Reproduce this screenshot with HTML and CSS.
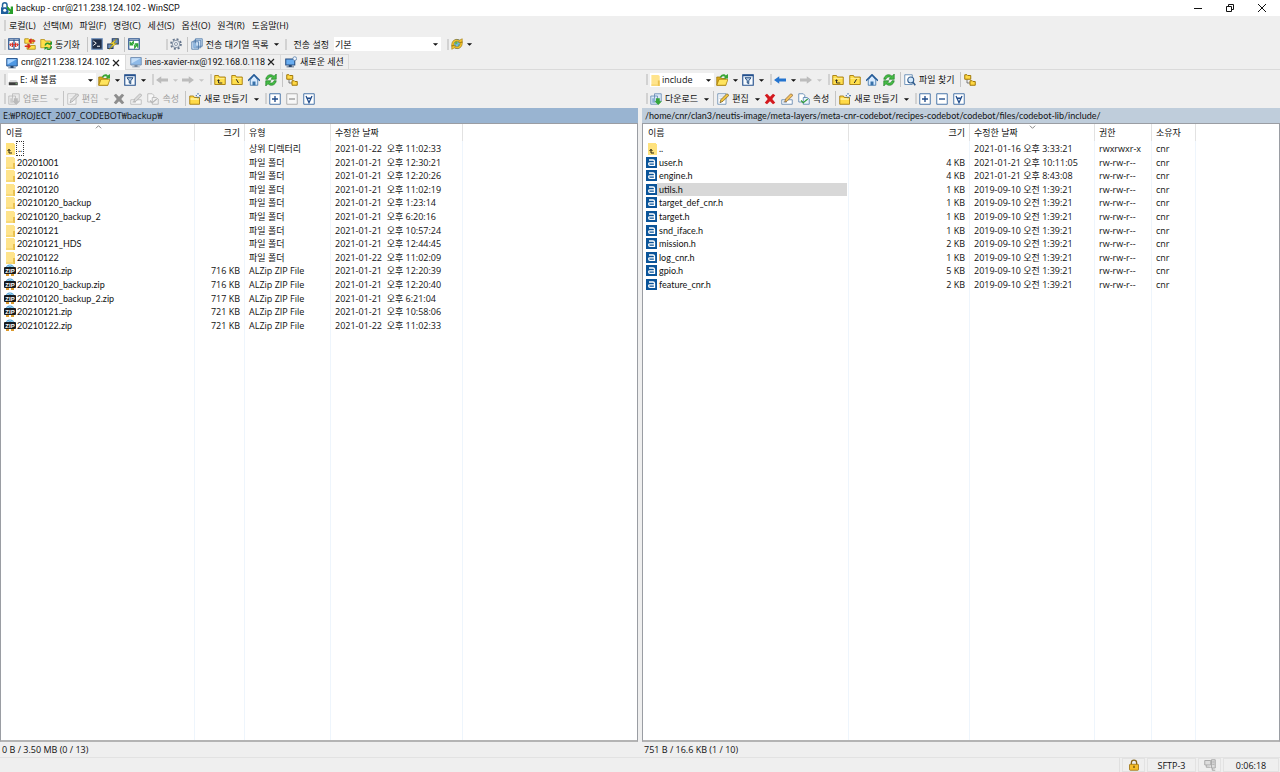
FILE: index.html
```html
<!DOCTYPE html>
<html lang="ko">
<head>
<meta charset="utf-8">
<title>backup - cnr@211.238.124.102 - WinSCP</title>
<link rel="stylesheet" href="styles.css">
</head>
<body>
<svg class="defs" aria-hidden="true">
  <symbol id="app" viewBox="0 0 16 16"><path d="M2 7V4a3 3 0 0 1 6 0v3" fill="none" stroke="#24659c" stroke-width="2"/><rect x="0" y="7" width="10" height="9" fill="#1f5f9c"/><circle cx="5" cy="11" r="2" fill="#fff"/><path d="M8 5l5 5V6h3v10H9l3-3-4-4z" fill="#29a02c"/></symbol>
  <symbol id="dn" viewBox="0 0 8 16"><path d="M1 7h6L4 10z" fill="currentColor"/></symbol>
  <symbol id="compare" viewBox="0 0 16 16"><path d="M1 1h14v14H1zM1 3h14M8 2v13" fill="#fff" stroke="#28528c" stroke-width="1.600"/><path d="M2 9h12M4.500 6.500L2.500 9l2 2.500M11.500 6.500l2 2.500-2 2.500M6 6v6M10 6v6" fill="none" stroke="#d92b22" stroke-width="1.300"/></symbol>
  <symbol id="fold2" viewBox="0 0 16 16"><path d="M1 1h5l1 1h6v5H1zM4 9h4l1 1h6v5H4z" fill="#ffe04a" stroke="#a8810a"/><path d="M15 4H8M10 1L7 4l3 3M1 11h6M5 8l3 3-3 3" fill="none" stroke="#dc2d20" stroke-width="1.800"/></symbol>
  <symbol id="foldsync" viewBox="0 0 16 16"><path d="M1 2h5l1 2h7v9H1z" fill="#ffdf4c" stroke="#b18a12"/><path d="M7 10a3.500 3.500 0 0 1 6-2M15 11a3.500 3.500 0 0 1-6 3" fill="none" stroke="#25962c" stroke-width="2"/><path d="M11 9h5V4zM11 12H6v4z" fill="#25962c"/></symbol>
  <symbol id="term" viewBox="0 0 16 16"><rect x="1" y="1" width="14" height="14" fill="#202d46" stroke="#6f92bf" stroke-width="1.500"/><path d="M3 4l4 3-4 3M8 11h4" fill="none" stroke="#fff" stroke-width="1.300"/></symbol>
  <symbol id="putty" viewBox="0 0 16 16"><path d="M7 1h8v7H7zM1 8h7v6H1z" fill="#6d90bc" stroke="#243c63" stroke-width="1.400"/><path d="M13 1L4 8h4l-5 7 10-8H9z" fill="#ffe43c" stroke="#8c7610" stroke-width=".7"/></symbol>
  <symbol id="syncbox" viewBox="0 0 16 16"><path d="M1 1h14v14H1zM1 3h14" fill="#fff" stroke="#28528c" stroke-width="1.500"/><path d="M3 9l4-4v3M3 5v4h4M13 8l-4 5v-4M13 13V8H9" fill="none" stroke="#2da335" stroke-width="1.700"/></symbol>
  <symbol id="gear" viewBox="0 0 16 16"><circle cx="8" cy="8" r="6.500" fill="none" stroke="#65758c" stroke-width="2.500" stroke-dasharray="2.600 2.500"/><circle cx="8" cy="8" r="5" fill="#e7ebf0" stroke="#6e7d92"/><circle cx="8" cy="8" r="2" fill="#fff" stroke="#6e7d92"/></symbol>
  <symbol id="queue" viewBox="0 0 16 16"><path d="M6 1h9v10H6zM4 3h9v10H4zM1 5h9v10H1z" fill="#cfe2f5" stroke="#4672a3"/><path d="M3 7h4v6H3z" fill="#8fb7df"/></symbol>
  <symbol id="globe" viewBox="0 0 16 16"><circle cx="8" cy="8" r="6" fill="#73b5e9" stroke="#2a69a5"/><path d="M5 5l3-1 1 3-3 2zM9 9l3-1-2 3z" fill="#65b64a"/><path d="M1 11C0 3 7 0 11 3l4-2v5h-5l1-1C7 3 3 5 4 10zM15 5c1 8-6 11-10 8l-4 2v-5h5l-1 1c4 2 8 0 7-5z" fill="#f7c62d" stroke="#946f08" stroke-width=".7"/></symbol>
  <symbol id="mon" viewBox="0 0 16 16"><path d="M1 2h14v10H1z" fill="#4f98e4" stroke="#29568f" stroke-width="1.300"/><path d="M2 3h12L2 10z" fill="#a9d4ff"/><path d="M6 12h4v2h3v1H3v-1h3z" fill="#29466b"/></symbol>
  <symbol id="monnew" viewBox="0 0 16 16"><path d="M1 4h12v8H1z" fill="#69adf0" stroke="#244c80" stroke-width="1.400"/><path d="M5 12h4v2h3v1H2v-1h3z" fill="#29466b"/><circle cx="13" cy="3.500" r="2.500" fill="#f1f7ff" stroke="#5178a4"/></symbol>
  <symbol id="drive" viewBox="0 0 16 16"><path d="M3 8h8l2 3H1z" fill="#ddd"/><path d="M1 11h12v4H1z" fill="#3c3c3c"/><path d="M10 13h2" stroke="#8ee58e"/></symbol>
  <symbol id="open" viewBox="0 0 16 16"><path d="M1 15V4h5l1 2h6v9z" fill="#d9a919" stroke="#9b7607"/><path d="M1 15l3-8h12l-3 8z" fill="#ffe45d" stroke="#a67d0c"/><path d="M5 4c3-5 7-4 8-2l3-2v6h-6l2-2c-2-2-4-1-5 1z" fill="#37a535"/></symbol>
  <symbol id="filter" viewBox="0 0 16 16"><path d="M1 1h14v14H1z" fill="#f7fbff" stroke="#24508d" stroke-width="1.500"/><path d="M1 2h14" stroke="#24508d" stroke-width="2"/><path d="M4 5h8L9 9v4l-2-1V9z" fill="#b5cce6" stroke="#244d7e" stroke-width="1.300"/></symbol>
  <symbol id="back" viewBox="0 0 16 16"><path d="M0 8l7-5v3h9v4H7v3z" fill="currentColor"/></symbol>
  <symbol id="fwd" viewBox="0 0 16 16"><path d="M16 8L9 3v3H0v4h9v3z" fill="currentColor"/></symbol>
  <symbol id="folder" viewBox="0 0 16 16"><path d="M1 14V2h5l1 2h8v10z" fill="#ffdf4d" stroke="#a57b0b" stroke-width="1.200"/><path d="M2 6h12" stroke="#fff29d"/></symbol>
  <symbol id="up" viewBox="0 0 16 16"><use href="#folder"/><path d="M6 12h5M6 12V8M4.500 9.500L6 7.500l1.500 2" fill="none" stroke="#222" stroke-width="1.200"/></symbol>
  <symbol id="root" viewBox="0 0 16 16"><use href="#folder"/><path d="M7 7l3 5" stroke="#222" stroke-width="1.300"/></symbol>
  <symbol id="rootfw" viewBox="0 0 16 16"><use href="#folder"/><path d="M10 7l-3 5" stroke="#222" stroke-width="1.300"/></symbol>
  <symbol id="home" viewBox="0 0 16 16"><path d="M3 8v7h10V8L8 2z" fill="#d8ebff" stroke="#2d659f"/><path d="M0 9l8-8 8 8" fill="none" stroke="#245b98" stroke-width="2"/><path d="M6 10h4v5H6z" fill="#3972aa"/></symbol>
  <symbol id="refresh" viewBox="0 0 16 16"><path d="M1 7c1-6 7-8 11-4l3-3v7H8l2-2C8 3 5 4 4 7zM15 9c-1 6-7 8-11 4l-3 3V9h7l-2 2c2 2 5 1 6-2z" fill="#45bd45" stroke="#16761c" stroke-width=".8"/></symbol>
  <symbol id="tree" viewBox="0 0 16 16"><path d="M4 7v5h6" fill="none" stroke="#555"/><path d="M1 1h3l1 1h4v5H1zM8 9h3l1 1h3v5H8z" fill="#ffd844" stroke="#9f7605" stroke-width="1.300"/></symbol>
  <symbol id="load" viewBox="0 0 16 16"><path d="M6 1h9v10H6zM1 4h9v11H1z" fill="#d9e8f7" stroke="#5c83ae"/><path d="M3 7h4v6H3z" fill="#8aafd3"/><path d="M8 7h5v4h3l-5 5-5-5h2z" fill="#36a53b"/></symbol>
  <symbol id="edit" viewBox="0 0 16 16"><path d="M1 1h11v14H1z" fill="#fff" stroke="#5981aa"/><path d="M3 4h7M3 7h4" stroke="#a9bed3"/><path d="M4 13l1-4 8-8 3 2-8 8z" fill="#f1c33d" stroke="#77612c"/></symbol>
  <symbol id="del" viewBox="0 0 16 16"><path d="M1 3l3-2 4 4 4-4 3 2-4 5 4 5-3 2-4-4-4 4-3-2 4-5z" fill="currentColor"/></symbol>
  <symbol id="ren" viewBox="0 0 16 16"><path d="M1 9h14v6H1z" fill="#fff" stroke="#5079a6"/><path d="M3 12h5" stroke="#5079a6"/><path d="M5 12l1-4 7-7 3 2-8 8z" fill="#f4c25c" stroke="#896435"/></symbol>
  <symbol id="prop" viewBox="0 0 16 16"><path d="M1 1h6l2 2v9H1z" fill="#fff" stroke="#4777a8"/><path d="M7 6h5l3 2v7H7z" fill="#e8f2fc" stroke="#4777a8"/><path d="M4 10l3 3 6-5" fill="none" stroke="#319d38" stroke-width="1.500"/></symbol>
  <symbol id="newf" viewBox="0 0 16 16"><path d="M1 15V4h5l1 2h7v9z" fill="#ffda47" stroke="#a57b0b" stroke-width="1.200"/><path d="M2 8h11" stroke="#fff3a7" stroke-width="2"/><path d="M12 0v7M9 3.500h7" stroke="#4877ac" stroke-width="1.400"/><circle cx="12" cy="3.500" r="1.500" fill="#fff"/></symbol>
  <symbol id="plus" viewBox="0 0 16 16"><path d="M1 1h14v14H1z" fill="#fff" stroke="#4773a8" stroke-width="1.300"/><path d="M8 4v8M4 8h8" stroke="#204c8b" stroke-width="1.800"/></symbol>
  <symbol id="minus" viewBox="0 0 16 16"><path d="M1 1h14v14H1z" fill="#fff" stroke="#4773a8" stroke-width="1.300"/><path d="M4 8h8" stroke="#204c8b" stroke-width="1.800"/></symbol>
  <symbol id="selfilt" viewBox="0 0 16 16"><path d="M1 1h14v14H1z" fill="#fff" stroke="#4773a8" stroke-width="1.300"/><path d="M4 4l4 9 4-9M5 7h6" fill="none" stroke="#204c8b" stroke-width="1.700"/></symbol>
  <symbol id="find" viewBox="0 0 16 16"><path d="M1 1h10v13H1z" fill="#fff" stroke="#4777a8"/><circle cx="9" cy="8" r="4" fill="#d5eafc" stroke="#325d8d" stroke-width="1.400"/><path d="M12 11l3 4" stroke="#325d8d" stroke-width="2"/></symbol>
  <symbol id="rowfolder" viewBox="0 0 10 13"><path d="M0 1h8v1h1v11H0z" fill="#ffe48c"/><path d="M7 7h2v6H7z" fill="#e9c04f"/><path d="M0 12h8" stroke="#f2cf65"/></symbol>
  <symbol id="rowup" viewBox="0 0 10 13"><path d="M0 1h8v1h1v11H0z" fill="#ffe27d"/><path d="M3 7v4h3M1.500 9L3 7.500 4.500 9" fill="none" stroke="#28240f"/></symbol>
  <symbol id="rowzip" viewBox="0 0 12 13"><circle cx="6" cy="5" r="4.500" fill="#489ad2"/><path d="M3 3q3-3 6 0" fill="none" stroke="#a9dcf8"/><path d="M2 10h3v2H2zM7 10h3v2H7z" fill="#dc9a2d"/><rect y="3" width="12" height="7" rx="1" fill="#171b20"/><text x="6" y="9" class="ziptext">ZIP</text></symbol>
  <symbol id="rowh" viewBox="0 0 11 13"><path d="M0 1h11v11H0z" fill="#0a5499"/><path d="M3 4h4q1.500 0 1.500 1.500V9.300H4Q2.700 9.300 2.700 8T4 6.800h4" fill="none" stroke="#fff" stroke-width="1.300"/></symbol>
  <symbol id="lock" viewBox="0 0 16 16"><path d="M4.500 8V5a3.500 3.500 0 0 1 7 0v3" fill="none" stroke="#856319" stroke-width="1.700"/><rect x="2" y="7" width="12" height="8" rx="1" fill="#f6bd27" stroke="#94690a"/><path d="M8 9v3" stroke="#5e430b" stroke-width="1.600"/></symbol>
  <symbol id="comp" viewBox="0 0 16 16"><path d="M1 2h8v6H1zM3 8v3h6M10 1h5v11h-5zM11 4h3M11 7h3M11 12v3h4" fill="#ddd" stroke="#aaa" stroke-width="1.300"/></symbol>
</svg>
<div class="window">
  <header class="title">
    <svg class="i"><use href="#app"/></svg><h1>backup - cnr@211.238.124.102 - WinSCP</h1>
    <button aria-label="최소화"><svg viewBox="0 0 10 10"><path d="M1 5.500h8"/></svg></button>
    <button aria-label="이전 크기로"><svg viewBox="0 0 10 10"><path d="M1.500 3.500h5v5h-5zM3.500 3V1.500h5v5H7"/></svg></button>
    <button aria-label="닫기"><svg viewBox="0 0 10 10"><path d="M1 1l8 8M9 1L1 9"/></svg></button>
  </header>
  <nav class="menu"><i class="grip"></i><button>로컬(L)</button><button>선택(M)</button><button>파일(F)</button><button>명령(C)</button><button>세션(S)</button><button>옵션(O)</button><button>원격(R)</button><button>도움말(H)</button></nav>
  <div class="bar main">
    <i class="grip"></i><button aria-label="비교"><svg class="i"><use href="#compare"/></svg></button><button aria-label="동기화 탐색"><svg class="i"><use href="#fold2"/></svg></button><button><svg class="i"><use href="#foldsync"/></svg><span>동기화</span></button><i class="sep"></i><button aria-label="터미널"><svg class="i"><use href="#term"/></svg></button><button aria-label="PuTTY"><svg class="i"><use href="#putty"/></svg></button><i class="sep"></i><button aria-label="최신 상태 유지"><svg class="i"><use href="#syncbox"/></svg></button>
    <i class="grip far"></i><button aria-label="환경 설정"><svg class="i"><use href="#gear"/></svg></button><i class="sep"></i><button><svg class="i"><use href="#queue"/></svg><span>전송 대기열 목록</span></button><button class="ar" aria-label="목록 메뉴"><svg><use href="#dn"/></svg></button>
    <i class="grip"></i><label for="preset">전송 설정</label><span class="combo preset"><select id="preset"><option>기본</option></select><svg><use href="#dn"/></svg></span>
    <i class="grip"></i><button aria-label="세션 색"><svg class="i"><use href="#globe"/></svg></button><button class="ar" aria-label="세션 메뉴"><svg><use href="#dn"/></svg></button>
  </div>
  <div class="tabs">
    <div class="tab on"><svg class="i"><use href="#mon"/></svg><button>cnr@211.238.124.102</button><button class="x" aria-label="탭 닫기"><svg viewBox="0 0 10 10"><path d="M2 2l6 6M8 2L2 8"/></svg></button></div>
    <div class="tab"><svg class="i pale"><use href="#mon"/></svg><button>ines-xavier-nx@192.168.0.118</button><button class="x" aria-label="탭 닫기"><svg viewBox="0 0 10 10"><path d="M2 2l6 6M8 2L2 8"/></svg></button></div>
    <div class="tab"><svg class="i"><use href="#monnew"/></svg><button>새로운 세션</button></div>
  </div>
  <main class="panes">
    <section class="pane">
      <div class="bar">
        <i class="grip"></i><span class="combo drive"><svg class="i"><use href="#drive"/></svg><select aria-label="드라이브"><option>E: 새 볼륨</option></select><svg><use href="#dn"/></svg></span><button aria-label="열기"><svg class="i"><use href="#open"/></svg></button><button class="ar" aria-label="열기 메뉴"><svg><use href="#dn"/></svg></button><button aria-label="필터"><svg class="i"><use href="#filter"/></svg></button><button class="ar" aria-label="필터 메뉴"><svg><use href="#dn"/></svg></button>
        <i class="grip"></i><button disabled aria-label="뒤로"><svg class="i nav"><use href="#back"/></svg></button><button disabled class="ar" aria-label="뒤로 메뉴"><svg><use href="#dn"/></svg></button><button disabled aria-label="앞으로"><svg class="i nav"><use href="#fwd"/></svg></button><button disabled class="ar" aria-label="앞으로 메뉴"><svg><use href="#dn"/></svg></button>
        <i class="grip"></i><button aria-label="상위"><svg class="i"><use href="#up"/></svg></button><button aria-label="루트"><svg class="i"><use href="#root"/></svg></button><button aria-label="홈"><svg class="i"><use href="#home"/></svg></button><button aria-label="새로 고침"><svg class="i"><use href="#refresh"/></svg></button><i class="sep"></i><button aria-label="트리"><svg class="i"><use href="#tree"/></svg></button>
      </div>
      <div class="bar">
        <i class="grip"></i><button disabled><svg class="i"><use href="#load"/></svg><span>업로드</span></button><button disabled class="ar" aria-label="업로드 메뉴"><svg><use href="#dn"/></svg></button><i class="sep"></i><button disabled><svg class="i"><use href="#edit"/></svg><span>편집</span></button><button disabled class="ar" aria-label="편집 메뉴"><svg><use href="#dn"/></svg></button><button disabled aria-label="삭제"><svg class="i dark"><use href="#del"/></svg></button><button disabled aria-label="이름 바꾸기"><svg class="i"><use href="#ren"/></svg></button><button disabled><svg class="i"><use href="#prop"/></svg><span>속성</span></button><i class="sep"></i><button><svg class="i"><use href="#newf"/></svg><span>새로 만들기</span></button><button class="ar" aria-label="새로 만들기 메뉴"><svg><use href="#dn"/></svg></button>
        <i class="grip"></i><button aria-label="선택"><svg class="i"><use href="#plus"/></svg></button><button disabled aria-label="선택 해제"><svg class="i"><use href="#minus"/></svg></button><button aria-label="선택 필터"><svg class="i"><use href="#selfilt"/></svg></button>
      </div>
      <div class="path active">E:₩PROJECT_2007_CODEBOT₩backup₩</div>
      <div class="list">
        <table>
          <colgroup><col class="l1"><col class="l2"><col class="l3"><col class="l4"><col></colgroup>
          <thead><tr><th>이름<svg class="sort" viewBox="0 0 8 4"><path d="M1 3.500L4 .5l3 3"/></svg></th><th class="n">크기</th><th>유형</th><th>수정한 날짜</th><th></th></tr></thead>
          <tbody>
            <tr><td><div class="f"><svg><use href="#rowup"/></svg><span class="focus">..</span></div></td><td></td><td>상위 디렉터리</td><td>2021-01-22&nbsp; 오후 11:02:33</td><td></td></tr>
            <tr><td><div class="f"><svg><use href="#rowfolder"/></svg><span>20201001</span></div></td><td></td><td>파일 폴더</td><td>2021-01-21&nbsp; 오후 12:30:21</td><td></td></tr>
            <tr><td><div class="f"><svg><use href="#rowfolder"/></svg><span>20210116</span></div></td><td></td><td>파일 폴더</td><td>2021-01-21&nbsp; 오후 12:20:26</td><td></td></tr>
            <tr><td><div class="f"><svg><use href="#rowfolder"/></svg><span>20210120</span></div></td><td></td><td>파일 폴더</td><td>2021-01-21&nbsp; 오후 11:02:19</td><td></td></tr>
            <tr><td><div class="f"><svg><use href="#rowfolder"/></svg><span>20210120_backup</span></div></td><td></td><td>파일 폴더</td><td>2021-01-21&nbsp; 오후 1:23:14</td><td></td></tr>
            <tr><td><div class="f"><svg><use href="#rowfolder"/></svg><span>20210120_backup_2</span></div></td><td></td><td>파일 폴더</td><td>2021-01-21&nbsp; 오후 6:20:16</td><td></td></tr>
            <tr><td><div class="f"><svg><use href="#rowfolder"/></svg><span>20210121</span></div></td><td></td><td>파일 폴더</td><td>2021-01-21&nbsp; 오후 10:57:24</td><td></td></tr>
            <tr><td><div class="f"><svg><use href="#rowfolder"/></svg><span>20210121_HDS</span></div></td><td></td><td>파일 폴더</td><td>2021-01-21&nbsp; 오후 12:44:45</td><td></td></tr>
            <tr><td><div class="f"><svg><use href="#rowfolder"/></svg><span>20210122</span></div></td><td></td><td>파일 폴더</td><td>2021-01-22&nbsp; 오후 11:02:09</td><td></td></tr>
            <tr><td><div class="f z"><svg><use href="#rowzip"/></svg><span>20210116.zip</span></div></td><td class="n">716 KB</td><td>ALZip ZIP File</td><td>2021-01-21&nbsp; 오후 12:20:39</td><td></td></tr>
            <tr><td><div class="f z"><svg><use href="#rowzip"/></svg><span>20210120_backup.zip</span></div></td><td class="n">716 KB</td><td>ALZip ZIP File</td><td>2021-01-21&nbsp; 오후 12:20:40</td><td></td></tr>
            <tr><td><div class="f z"><svg><use href="#rowzip"/></svg><span>20210120_backup_2.zip</span></div></td><td class="n">717 KB</td><td>ALZip ZIP File</td><td>2021-01-21&nbsp; 오후 6:21:04</td><td></td></tr>
            <tr><td><div class="f z"><svg><use href="#rowzip"/></svg><span>20210121.zip</span></div></td><td class="n">721 KB</td><td>ALZip ZIP File</td><td>2021-01-21&nbsp; 오후 10:58:06</td><td></td></tr>
            <tr><td><div class="f z"><svg><use href="#rowzip"/></svg><span>20210122.zip</span></div></td><td class="n">721 KB</td><td>ALZip ZIP File</td><td>2021-01-22&nbsp; 오후 11:02:33</td><td></td></tr>
            <tr class="fill"><td></td><td></td><td></td><td></td><td></td></tr>
          </tbody>
        </table>
      </div>
      <div class="sum">0 B / 3.50 MB (0 / 13)</div>
    </section>
    <section class="pane">
      <div class="bar">
        <i class="grip"></i><span class="combo dir"><svg class="i"><use href="#rowfolder"/></svg><select aria-label="디렉터리"><option>include</option></select><svg><use href="#dn"/></svg></span><button aria-label="열기"><svg class="i"><use href="#open"/></svg></button><button class="ar" aria-label="열기 메뉴"><svg><use href="#dn"/></svg></button><button aria-label="필터"><svg class="i"><use href="#filter"/></svg></button><button class="ar" aria-label="필터 메뉴"><svg><use href="#dn"/></svg></button>
        <i class="grip"></i><button aria-label="뒤로"><svg class="i blue"><use href="#back"/></svg></button><button class="ar" aria-label="뒤로 메뉴"><svg><use href="#dn"/></svg></button><button disabled aria-label="앞으로"><svg class="i nav"><use href="#fwd"/></svg></button><button disabled class="ar" aria-label="앞으로 메뉴"><svg><use href="#dn"/></svg></button>
        <i class="grip"></i><button aria-label="상위"><svg class="i"><use href="#up"/></svg></button><button aria-label="루트"><svg class="i"><use href="#rootfw"/></svg></button><button aria-label="홈"><svg class="i"><use href="#home"/></svg></button><button aria-label="새로 고침"><svg class="i"><use href="#refresh"/></svg></button><i class="sep"></i><button><svg class="i"><use href="#find"/></svg><span>파일 찾기</span></button><i class="sep"></i><button aria-label="트리"><svg class="i"><use href="#tree"/></svg></button>
      </div>
      <div class="bar">
        <i class="grip"></i><button><svg class="i"><use href="#load"/></svg><span>다운로드</span></button><button class="ar" aria-label="다운로드 메뉴"><svg><use href="#dn"/></svg></button><i class="sep"></i><button><svg class="i"><use href="#edit"/></svg><span>편집</span></button><button class="ar" aria-label="편집 메뉴"><svg><use href="#dn"/></svg></button><button aria-label="삭제"><svg class="i red"><use href="#del"/></svg></button><button aria-label="이름 바꾸기"><svg class="i"><use href="#ren"/></svg></button><button><svg class="i"><use href="#prop"/></svg><span>속성</span></button><i class="sep"></i><button><svg class="i"><use href="#newf"/></svg><span>새로 만들기</span></button><button class="ar" aria-label="새로 만들기 메뉴"><svg><use href="#dn"/></svg></button>
        <i class="grip"></i><button aria-label="선택"><svg class="i"><use href="#plus"/></svg></button><button aria-label="선택 해제"><svg class="i"><use href="#minus"/></svg></button><button aria-label="선택 필터"><svg class="i"><use href="#selfilt"/></svg></button>
      </div>
      <div class="path">/home/cnr/clan3/neutis-image/meta-layers/meta-cnr-codebot/recipes-codebot/codebot/files/codebot-lib/include/</div>
      <div class="list">
        <table>
          <colgroup><col class="r1"><col class="r2"><col class="r3"><col class="r4"><col class="r5"><col></colgroup>
          <thead><tr><th>이름</th><th class="n">크기</th><th>수정한 날짜<svg class="sort" viewBox="0 0 8 4"><path d="M1 .5l3 3 3-3"/></svg></th><th>권한</th><th>소유자</th><th></th></tr></thead>
          <tbody>
            <tr><td><div class="f"><svg><use href="#rowup"/></svg><span>..</span></div></td><td></td><td>2021-01-16 오후 3:33:21</td><td>rwxrwxr-x</td><td>cnr</td><td></td></tr>
            <tr><td><div class="f h"><svg><use href="#rowh"/></svg><span>user.h</span></div></td><td class="n">4 KB</td><td>2021-01-21 오후 10:11:05</td><td>rw-rw-r--</td><td>cnr</td><td></td></tr>
            <tr><td><div class="f h"><svg><use href="#rowh"/></svg><span>engine.h</span></div></td><td class="n">4 KB</td><td>2021-01-21 오후 8:43:08</td><td>rw-rw-r--</td><td>cnr</td><td></td></tr>
            <tr><td><div class="f h sel"><svg><use href="#rowh"/></svg><span>utils.h</span></div></td><td class="n">1 KB</td><td>2019-09-10 오전 1:39:21</td><td>rw-rw-r--</td><td>cnr</td><td></td></tr>
            <tr><td><div class="f h"><svg><use href="#rowh"/></svg><span>target_def_cnr.h</span></div></td><td class="n">1 KB</td><td>2019-09-10 오전 1:39:21</td><td>rw-rw-r--</td><td>cnr</td><td></td></tr>
            <tr><td><div class="f h"><svg><use href="#rowh"/></svg><span>target.h</span></div></td><td class="n">1 KB</td><td>2019-09-10 오전 1:39:21</td><td>rw-rw-r--</td><td>cnr</td><td></td></tr>
            <tr><td><div class="f h"><svg><use href="#rowh"/></svg><span>snd_iface.h</span></div></td><td class="n">1 KB</td><td>2019-09-10 오전 1:39:21</td><td>rw-rw-r--</td><td>cnr</td><td></td></tr>
            <tr><td><div class="f h"><svg><use href="#rowh"/></svg><span>mission.h</span></div></td><td class="n">2 KB</td><td>2019-09-10 오전 1:39:21</td><td>rw-rw-r--</td><td>cnr</td><td></td></tr>
            <tr><td><div class="f h"><svg><use href="#rowh"/></svg><span>log_cnr.h</span></div></td><td class="n">1 KB</td><td>2019-09-10 오전 1:39:21</td><td>rw-rw-r--</td><td>cnr</td><td></td></tr>
            <tr><td><div class="f h"><svg><use href="#rowh"/></svg><span>gpio.h</span></div></td><td class="n">5 KB</td><td>2019-09-10 오전 1:39:21</td><td>rw-rw-r--</td><td>cnr</td><td></td></tr>
            <tr><td><div class="f h"><svg><use href="#rowh"/></svg><span>feature_cnr.h</span></div></td><td class="n">2 KB</td><td>2019-09-10 오전 1:39:21</td><td>rw-rw-r--</td><td>cnr</td><td></td></tr>
            <tr class="fill"><td></td><td></td><td></td><td></td><td></td><td></td></tr>
          </tbody>
        </table>
      </div>
      <div class="sum">751 B / 16.6 KB (1 / 10)</div>
    </section>
  </main>
  <footer class="status"><span class="grow"></span><span class="cell ico"><svg class="i"><use href="#lock"/></svg></span><span class="cell proto">SFTP-3</span><span class="cell ico"><svg class="i"><use href="#comp"/></svg></span><span class="cell time">0:06:18</span></footer>
</div>
</body>
</html>
```
FILE: styles.css
```css
* { box-sizing: border-box; }
html, body { height: 100%; margin: 0; }
body, button, select { font: 9px/13px "Open Sans", "Noto Sans CJK KR", sans-serif; color: #111; }
button { border: 0; padding: 0; background: none; white-space: nowrap; }
svg { display: block; flex: none; }
.defs { display: none; }
.ziptext { font: bold 6px "Liberation Sans", sans-serif; fill: #fff; text-anchor: middle; }
.i { width: 12px; height: 12px; }
.window { height: 100vh; display: flex; flex-direction: column; background: #efefef; overflow: hidden; }

.title { height: 16px; display: flex; align-items: center; background: #fff; padding: 0 2px 0 1px; }
.title h1 { flex: 1; margin: 0; padding-left: 3px; font-size: 9px; font-weight: 400; }
.title h1, .tab button { font-family: Roboto, "Noto Sans CJK KR", sans-serif; }
.path, .f { font-family: Lato, "Noto Sans CJK KR", sans-serif; }
.title button { width: 32px; height: 16px; display: flex; align-items: center; justify-content: center; }
.title button svg { width: 10px; height: 10px; fill: none; stroke: #111; }

.menu { height: 18px; display: flex; align-items: center; gap: 7px; }
.menu .grip { margin-right: -4px; }

.bar { height: 19px; display: flex; align-items: center; }
.bar.main { height: 20px; }
.bar button { height: 17px; display: flex; align-items: center; }
.bar button .i { margin: 0 3px 0 2px; }
.bar.main button .i { margin: 0 2px; }
.bar button span { padding: 0 4px 0 0; }
.bar.main button span { padding: 0 4px 0 1px; }
.grip { flex: none; width: 2px; height: 11px; margin: 0 0 0 4px; background: #d2d2d2; }
.grip.far { margin-left: 24px; }
.sep { flex: none; width: 1px; height: 15px; margin: 0 1px 0 2px; background: #c4c4c4; }
.main .sep { margin-left: 3px; }
.bar .ar { width: 9px; justify-content: center; }
.bar .ar svg, .combo > svg:last-child { width: 7px; height: 14px; }
.bar button:disabled { color: #a0a0a0; }
.bar button:disabled svg { filter: grayscale(1); opacity: .5; }
.bar button:disabled .nav { opacity: 1; color: #bcbcbc; }
.bar button:disabled .dark { opacity: 1; color: #8e8e8e; }
.blue { color: #2474cf; }
.red { color: #d3191e; }
.combo { display: flex; align-items: center; height: 14px; background: #fff; margin-left: 2px; padding-right: 2px; }
.combo select { flex: 1; min-width: 0; appearance: none; border: 0; padding: 0; background: none; height: 14px; color: #111; }
.main label { padding: 0 5px 0 6px; }
.preset { width: 107px; margin: 0 2px 0 0; padding-left: 1px; }
.drive { width: 88px; }
.dir { width: 64px; }

.tabs { height: 16px; display: flex; align-items: stretch; border-bottom: 1px solid #dadada; }
.tab { display: flex; align-items: center; padding: 0 4px; border-right: 1px solid #dadada; border-top: 1px solid #dadada; }
.tab.on { background: #fff; margin-bottom: -1px; padding-left: 6px; }
.tab .i { margin-right: 3px; }
.tab .x { width: 10px; margin-left: 1px; }
.tab .x svg { width: 10px; height: 10px; fill: none; stroke: #222; stroke-width: 1.2; }
.pale { opacity: .6; }

.panes { flex: 1; min-height: 0; display: grid; grid-template-columns: 1fr 1fr; column-gap: 4px; }
.pane { min-width: 0; display: flex; flex-direction: column; }
.path { height: 15px; padding: 0 3px; line-height: 15px; background: #bfcddb; white-space: nowrap; overflow: hidden; }
.path.active { background: #99b4d1; font-family: "Open Sans", "Noto Sans CJK KR", sans-serif; }
.list { flex: 1; min-height: 0; background: #fff; border: 1px solid #9a9da3; border-bottom-width: 2px; border-bottom-color: #b4b4b4; }
.sum { height: 15px; padding: 0 2px; line-height: 15px; }

table { width: 100%; height: 100%; table-layout: fixed; border-collapse: separate; border-spacing: 0; }
th, td { padding: 0 4px; text-align: left; font-weight: 400; white-space: nowrap; line-height: 13px; border-right: 1px solid #eef5fc; }
th { height: 17px; position: relative; padding-bottom: 1px; border-right-color: #e2e2e2; }
th:first-child { padding-left: 5px; }
th:last-child, td:last-child { border-right: 0; }
tbody tr { height: 14px; }
tbody tr:nth-child(5n+3), tbody tr:nth-child(5n) { height: 13px; }
tbody tr.fill:last-child { height: 100%; }
th.n, td.n { text-align: right; }
tbody td:first-child { padding: 0; }
.sort { position: absolute; top: 1px; left: 50%; width: 7px; height: 4px; margin-left: -3px; fill: none; stroke: #777; }
.l1 { width: 194px; } .l2 { width: 50px; } .l3 { width: 86px; } .l4 { width: 132px; }
.r1 { width: 206px; } .r2 { width: 121px; } .r3 { width: 125px; } .r4 { width: 57px; } .r5 { width: 44px; }
.f { display: flex; height: 13px; padding-left: 5px; padding-right: 1px; align-items: center; }
.f svg { width: 10px; height: 13px; margin-right: 1px; }
.f.z { padding-left: 3px; }
.f.z svg { width: 12px; }
.f.h { padding-left: 3px; }
.f.h svg { width: 11px; margin-right: 0; }
.f.h span { padding-left: 2px; }
.f.sel span { flex: 1; background: #d8d8d8; }
.focus { outline: 1px dotted #333; outline-offset: 0; padding: 0 1px; }

.status { height: 15px; display: flex; gap: 2px; border-top: 1px solid #e2e2e2; padding-right: 1px; }
.grow { flex: 1; border-right: 1px solid #e0e0e0; }
.cell { display: flex; align-items: center; justify-content: center; border: 1px solid #e2e2e2; }
.ico { width: 23px; }
.proto { width: 49px; }
.time { width: 56px; }
```
